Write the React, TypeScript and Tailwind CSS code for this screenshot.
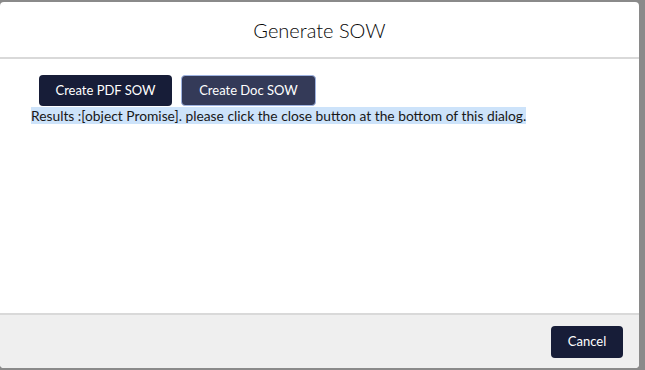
export default function App() {
  return (
    <div className="w-[645px] h-[370px] bg-[#8a8a8a] pt-[2px] pb-[2px] pr-[6px] overflow-hidden" style={{ fontFamily: "Lato, 'Noto Sans', sans-serif" }}>
      <div className="h-[366px] bg-white rounded-[4px] flex flex-col overflow-hidden">
        {/* header */}
        <div className="h-[57px] flex items-center justify-center border-b-2 border-[#d9d9d9] shrink-0">
          <h2 className="text-[20px] text-[#080707] font-light leading-none">Generate SOW</h2>
        </div>

        {/* body */}
        <div className="flex-1 pt-4 pl-[31px]">
          <div className="flex gap-[9px] pl-2">
            <button className="h-[31px] px-4 rounded-[4px] bg-[#171d38] text-white text-[13px] w-[133px]">Create PDF SOW</button>
            <button className="h-[31px] px-4 rounded-[4px] bg-[#343a58] text-white text-[13px] w-[135px] border border-[#9fb3e0]">Create Doc SOW</button>
          </div>
          <p className="mt-[2px] text-[13.8px] leading-[16px] text-[#181818]">
            <span className="bg-[#cde3fa]">Results :[object Promise]. please click the close button at the bottom of this dialog.</span>
          </p>
        </div>

        {/* footer */}
        <div className="h-[55px] bg-[#efefef] border-t-2 border-[#d9d9d9] flex items-center justify-end pr-4 shrink-0">
          <button className="h-[32px] w-[72px] rounded-[4px] bg-[#171d38] text-white text-[13px]">Cancel</button>
        </div>
      </div>
    </div>
  );
}
